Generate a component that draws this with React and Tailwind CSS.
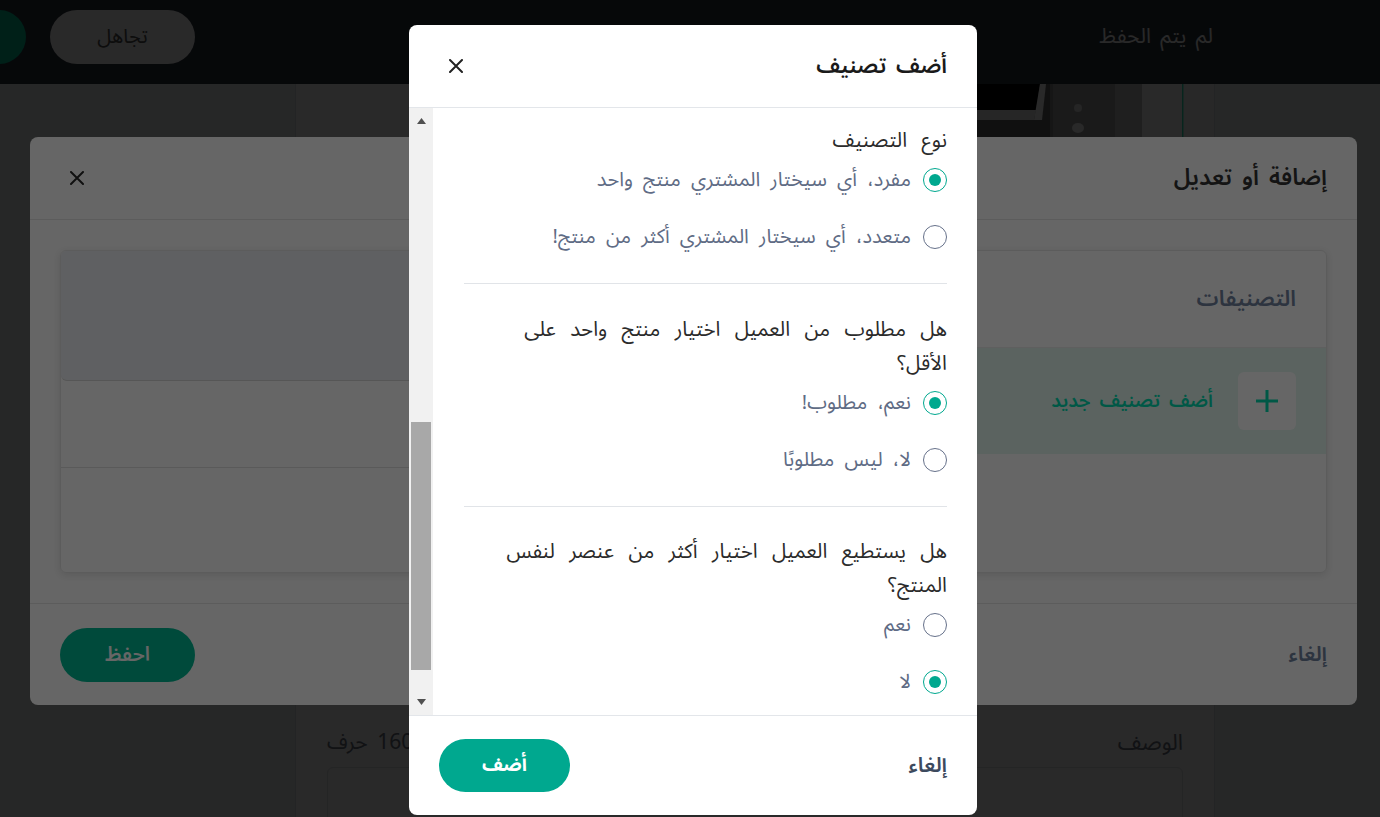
import React from "react";

const F = "font-['Noto_Sans_Arabic','DejaVu_Sans','Noto_Sans',sans-serif] [word-spacing:4px]";

function XIcon({ color = "#1f1f1f", size = 14 }) {
  return (
    <svg width={size} height={size} viewBox="0 0 14 14" fill="none">
      <path d="M1 1L13 13M13 1L1 13" stroke={color} strokeWidth="2" strokeLinecap="round" />
    </svg>
  );
}

function Radio({ checked, label }) {
  return (
    <div className="flex h-[44px] items-center gap-3">
      {checked ? (
        <span className="flex h-6 w-6 shrink-0 items-center justify-center rounded-full border-[1.5px] border-[#00a88f]">
          <span className="h-3 w-3 rounded-full bg-[#00a88f]" />
        </span>
      ) : (
        <span className="h-6 w-6 shrink-0 rounded-full border-[1.5px] border-[#66718a]" />
      )}
      <span className="text-[20px] leading-[24px] text-[#5f6c85] [word-spacing:5px]">{label}</span>
    </div>
  );
}

function Section({ lines, options, pt, last }) {
  return (
    <div className={`${pt} ${last ? "pb-[11px]" : "pb-[24px] border-b border-[#e1e4e8]"}`}>
      {lines.map((l, i) => (
        <div key={i} className="h-[34px] text-[20.5px] leading-[34px] text-[#2b2b2b] [word-spacing:9px]">
          {l}
        </div>
      ))}
      <div className="flex flex-col gap-[13px]">
        {options.map((o, i) => (
          <Radio key={i} checked={o.checked} label={o.label} />
        ))}
      </div>
    </div>
  );
}

function Strip() {
  return (
    <svg width="918" height="53" viewBox="0 0 918 53" className="block shrink-0">
      <rect width="918" height="53" fill="#ffffff" />
      <rect x="560" width="104" height="53" fill="#4a4a4a" />
      {/* monitor */}
      <rect x="664" y="0" width="90" height="53" fill="#6a6a6a" />
      <path d="M664 0 H744 L740 26 H664 Z" fill="#050505" />
      <path d="M664 26 H740 L738 36 H664 Z" fill="#f0f0f0" />
      <path d="M744 0 H750 L746 36 H738 Z" fill="#ffffff" />
      <rect x="664" y="36" width="12" height="17" fill="#d8d8d8" />
      {/* tower */}
      <rect x="754" y="0" width="65" height="53" fill="#a8a8a8" />
      <rect x="754" y="0" width="3" height="53" fill="#8a8a8a" />
      <circle cx="782" cy="24" r="4" fill="#e6e6e6" />
      <ellipse cx="782" cy="44" rx="6" ry="5" fill="#ffffff" />
      <rect x="819" y="0" width="27" height="53" fill="#c4c4c4" />
      <rect x="846" y="0" width="40" height="53" fill="#ffffff" />
      <rect x="886" y="0" width="1.5" height="53" fill="#2ee6b8" />
      <rect x="888" y="0" width="30" height="53" fill="#fbfbfb" />
    </svg>
  );
}

export default function App() {
  return (
    <div className={`relative h-[817px] w-[1380px] overflow-hidden bg-[#eef6f3] ${F}`}>
      {/* base page */}
      <div className="flex h-[84px] items-start justify-between bg-[#2c323e] pr-[167px] pt-[10px]">
        <div className="flex items-center gap-[24px]">
          <div className="-ml-[28px] h-[54px] w-[54px] rounded-full bg-[#00c99c]" />
          <div className="flex h-[54px] w-[145px] items-center justify-center rounded-full bg-white text-[20px] text-[#555]">
            تجاهل
          </div>
        </div>
        <div dir="rtl" className="flex h-[54px] items-center text-[21px] text-white">لم يتم الحفظ</div>
      </div>
      <div className="flex h-[733px]">
        <div className="w-[296px] border-r border-[#dfe3e6]" />
        <div className="flex w-[918px] flex-col bg-white">
          <Strip />
          <div className="mt-[594px] px-[31px]" dir="rtl">
            <div className="flex h-[24px] items-center justify-between text-[#6b7280]">
              <span className="text-[22px]">الوصف</span>
              <span className="text-[21px]">160 حرف</span>
            </div>
            <div className="mt-[12px] h-[80px] rounded-md border border-[#e2e5e9]" />
          </div>
        </div>
        <div className="flex-1 border-l border-[#dfe3e6]" />
      </div>

      {/* overlay 1 */}
      <div className="absolute inset-0 bg-black/60" />

      {/* back modal */}
      <div dir="rtl" className="absolute left-[30px] top-[137px] flex h-[568px] w-[1327px] flex-col rounded-lg bg-white">
        <div className="flex h-[83px] items-center justify-between border-b border-[#e6e6e6] pl-[40px] pr-[30px]">
          <span className="text-[23px] font-semibold text-[#333]">إضافة أو تعديل</span>
          <XIcon color="#2a2a2a" />
        </div>
        <div className="p-[30px]">
          <div className="flex h-[323px] overflow-hidden rounded-md border border-[#e6e6e6] shadow-[0_2px_8px_rgba(0,0,0,0.12)]">
            <div className="flex flex-1 flex-col">
              <div className="flex h-[97px] items-center border-b border-[#eeeeee] pr-[30px] text-[22px] font-semibold text-[#70829f]">
                التصنيفات
              </div>
              <div className="flex h-[106px] items-center gap-[25px] bg-[#e4f8f0] pr-[30px]">
                <div className="flex h-[58px] w-[58px] items-center justify-center rounded-md bg-white">
                  <svg width="26" height="26" viewBox="0 0 26 26">
                    <path d="M13 2V24M2 13H24" stroke="#00dcb0" strokeWidth="3" />
                  </svg>
                </div>
                <span className="text-[19px] font-semibold text-[#00dcb0]">أضف تصنيف جديد</span>
              </div>
            </div>
            <div className="flex w-[350px] flex-col border-r border-[#e6e6e6]">
              <div className="h-[130px] rounded-bl-md border-b border-[#d6d6d6] bg-[#eef0f5]" />
              <div className="h-[87px] border-b border-[#e0e0e0]" />
              <div className="flex-1" />
            </div>
          </div>
        </div>
        <div className="flex flex-1 items-center justify-between border-t border-[#e6e6e6] pl-[30px] pr-[30px]">
          <span className="text-[21px] font-semibold text-[#70829f]">إلغاء</span>
          <div className="flex h-[54px] w-[135px] items-center justify-center rounded-full bg-[#00b994] text-[20px] font-semibold text-white">
            احفظ
          </div>
        </div>
      </div>

      {/* overlay 2 */}
      <div className="absolute inset-0 bg-black/60" />

      {/* front modal */}
      <div className="absolute left-[409px] top-[25px] flex h-[790px] w-[568px] flex-col overflow-hidden rounded-lg bg-white">
        <div dir="rtl" className="flex h-[83px] shrink-0 items-center justify-between border-b border-[#e3e6ea] pl-[40px] pr-[30px]">
          <span className="text-[22px] font-semibold text-[#1a1a1a]">أضف تصنيف</span>
          <XIcon color="#222" />
        </div>
        <div className="flex h-[607px] shrink-0">
          <div className="flex w-[24px] flex-col bg-[#f1f1f1]">
            <div className="flex h-[26px] items-center justify-center">
              <svg width="9" height="6" viewBox="0 0 9 6"><path d="M4.5 0L9 6H0Z" fill="#505050" /></svg>
            </div>
            <div className="h-[288px]" />
            <div className="mx-[2px] h-[248px] bg-[#a8a8a8]" />
            <div className="flex-1" />
            <div className="flex h-[26px] items-center justify-center">
              <svg width="9" height="6" viewBox="0 0 9 6"><path d="M0 0H9L4.5 6Z" fill="#505050" /></svg>
            </div>
          </div>
          <div dir="rtl" className="flex-1 overflow-hidden pl-[31px] pr-[30px]">
            <Section
              pt="pt-[16px]"
              lines={["نوع التصنيف"]}
              options={[
                { checked: true, label: "مفرد، أي سيختار المشتري منتج واحد" },
                { checked: false, label: "متعدد، أي سيختار المشتري أكثر من منتج!" },
              ]}
            />
            <Section
              pt="pt-[29px]"
              lines={["هل مطلوب من العميل اختيار منتج واحد على", "الأقل؟"]}
              options={[
                { checked: true, label: "نعم، مطلوب!" },
                { checked: false, label: "لا، ليس مطلوبًا" },
              ]}
            />
            <Section
              pt="pt-[28px]"
              last
              lines={["هل يستطيع العميل اختيار أكثر من عنصر لنفس", "المنتج؟"]}
              options={[
                { checked: false, label: "نعم" },
                { checked: true, label: "لا" },
              ]}
            />
          </div>
        </div>
        <div dir="rtl" className="flex flex-1 items-center justify-between border-t border-[#e3e6ea] pl-[30px] pr-[30px]">
          <span className="text-[21px] font-semibold text-[#3d4a5e]">إلغاء</span>
          <div className="flex h-[53px] w-[131px] items-center justify-center rounded-full bg-[#00a88f] text-[19px] font-bold text-white">
            أضف
          </div>
        </div>
      </div>
    </div>
  );
}
